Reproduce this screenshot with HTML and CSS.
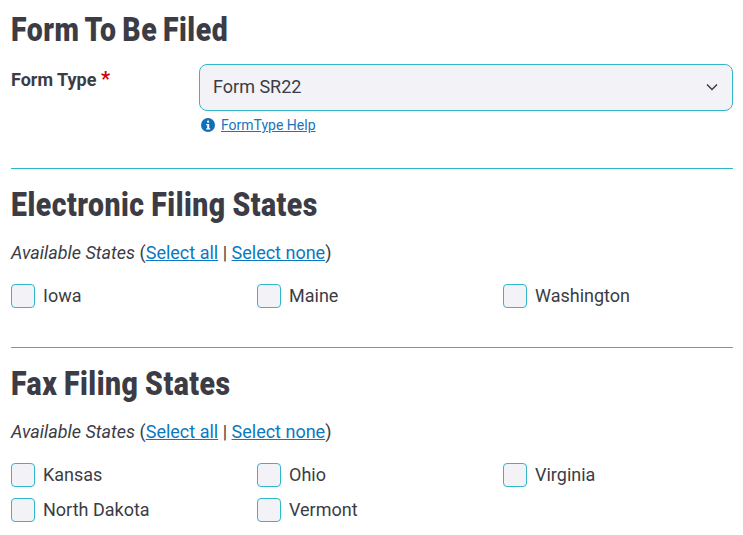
FILE: index.html
```html
<!DOCTYPE html>
<html lang="en">
<head>
    <meta charset="UTF-8">
    <title>Form To Be Filed</title>
    <link rel="stylesheet" href="styles.css">
</head>
<body>
    <section class="section first">
        <h2 class="heading">Form To Be Filed</h2>
        <div class="field">
            <label class="field-label">Form Type <span class="required">*</span></label>
            <div class="field-control">
                <div class="select">
                    <span>Form SR22</span>
                    <svg class="chevron" width="12" height="8" viewBox="0 0 12 8"><path d="M1 1.5 L6 6.5 L11 1.5" fill="none" stroke="#3b3c45" stroke-width="1.5"/></svg>
                </div>
                <div class="help">
                    <svg class="help-icon" width="14" height="14" viewBox="0 0 14 14">
                        <circle cx="7" cy="7" r="7" fill="#0f6fb8"/>
                        <rect x="6" y="2.6" width="2.2" height="2.2" rx="1" fill="#fff"/>
                        <path d="M5.2 6h3v4.2h1v1.2H5.2v-1.2h1V7.2h-1z" fill="#fff"/>
                    </svg>
                    <a href="#" class="help-link">FormType Help</a>
                </div>
            </div>
        </div>
    </section>

    <section class="section">
        <h2 class="heading">Electronic Filing States</h2>
        <p class="available"><em>Available States</em> (<a href="#">Select all</a> | <a href="#">Select none</a>)</p>
        <div class="states">
            <label class="state"><span class="box"></span>Iowa</label>
            <label class="state"><span class="box"></span>Maine</label>
            <label class="state"><span class="box"></span>Washington</label>
        </div>
    </section>

    <section class="section last">
        <h2 class="heading">Fax Filing States</h2>
        <p class="available"><em>Available States</em> (<a href="#">Select all</a> | <a href="#">Select none</a>)</p>
        <div class="states">
            <label class="state"><span class="box"></span>Kansas</label>
            <label class="state"><span class="box"></span>Ohio</label>
            <label class="state"><span class="box"></span>Virginia</label>
            <label class="state"><span class="box"></span>North Dakota</label>
            <label class="state"><span class="box"></span>Vermont</label>
        </div>
    </section>
</body>
</html>
```

FILE: styles.css
```css
body {
    margin: 0;
    padding: 0 10px 0 11px;
    background-color: #fff;
    color: #3b3c45;
    font-family: Roboto, "Liberation Sans", sans-serif;
    font-size: 18px;
    line-height: 24px;
    overflow: hidden;
}
.section {
    border-bottom: 1px solid #2fb8cc;
    height: 178px;
}
.section.first {
    height: 168px;
}
.section.last {
    border-bottom: none;
}
.heading {
    margin: 0;
    padding-top: 18px;
    font-family: Roboto, "Liberation Sans", sans-serif;
    font-size: 33px;
    line-height: 36px;
    font-weight: 900;
    letter-spacing: 0.6px;
    word-spacing: -1px;
    color: #3b3c45;
    white-space: nowrap;
    transform: scaleX(0.86);
    transform-origin: left;
}
.first .heading {
    padding-top: 12px;
    word-spacing: -2px;
}
.field {
    display: flex;
    margin-top: 16px;
}
.field-label {
    width: 188px;
    font-weight: bold;
    line-height: 32px;
}
.required {
    color: #cc0000;
    font-size: 20px;
    line-height: 1;
}
.field-control {
    flex: 1;
}
.select {
    display: flex;
    align-items: center;
    justify-content: space-between;
    box-sizing: border-box;
    height: 47px;
    padding: 0 14px 2px 13px;
    background-color: #f2f2f7;
    border: 1px solid #2fb8cc;
    border-radius: 8px;
}
.help {
    display: flex;
    align-items: center;
    gap: 6px;
    margin-top: 5px;
    padding-left: 2px;
    font-size: 14px;
    line-height: 18px;
}
.help-link {
    color: #1a75bb;
}
.available a {
    color: #0a78c2;
}
.available {
    margin: 18px 0 0;
}
.states {
    display: grid;
    grid-template-columns: repeat(3, 246px);
    row-gap: 10.5px;
    margin-top: 19px;
}
.state {
    display: flex;
    align-items: center;
    gap: 8px;
}
.box {
    box-sizing: border-box;
    width: 24px;
    height: 24px;
    background-color: #f2f2f7;
    border: 1px solid #2fb8cc;
    border-radius: 4px;
}
```
